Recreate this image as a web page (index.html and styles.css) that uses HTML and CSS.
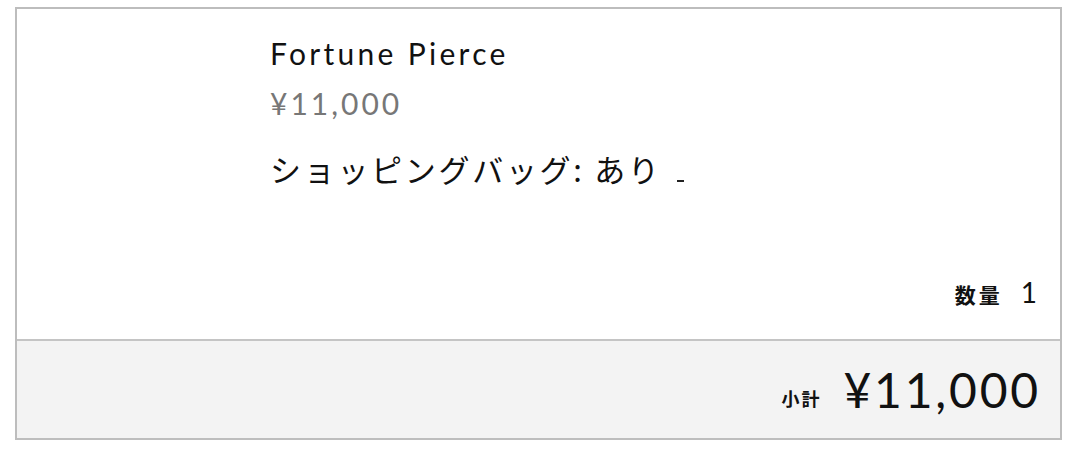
FILE: index.html
```html
<!DOCTYPE html>
<html lang="ja">
<head>
<meta charset="utf-8">
<link rel="stylesheet" href="styles.css">
</head>
<body>
<div class="card">
  <div class="item">
    <div class="thumb"></div>
    <div class="info">
      <div class="name">Fortune Pierce</div>
      <div class="price">¥11,000</div>
      <div class="option">ショッピングバッグ: あり<span class="dash"></span></div>
      <div class="qty"><span class="qty-label">数量</span><span class="qty-val">1</span></div>
    </div>
  </div>
  <div class="subtotal">
    <span class="sub-label">小計</span><span class="sub-val">¥11,000</span>
  </div>
</div>
</body>
</html>
```

FILE: styles.css
```css
html, body {
  margin: 0;
  padding: 0;
  background: #fff;
}
body {
  font-family: Lato, "Noto Sans CJK JP", sans-serif;
  color: #111;
}
.card {
  margin: 7px 18px 0 15px;
  border: 2px solid #bdbdbd;
}
.item {
  display: grid;
  grid-template-columns: 253px 1fr;
  height: 330px;
  border-bottom: 2px solid #c4c4c4;
}
.info {
  display: flex;
  flex-direction: column;
  padding-top: 24px;
  padding-right: 22px;
}
.name {
  font-size: 30px;
  letter-spacing: 3.3px;
  line-height: 40px;
}
.price {
  font-size: 30px;
  letter-spacing: 3px;
  line-height: 48px;
  margin-top: 6px;
  color: #777;
}
.option {
  font-family: "Noto Sans CJK JP", sans-serif;
  font-size: 31px;
  letter-spacing: 2.7px;
  line-height: 60px;
  margin-top: 12px;
  display: flex;
  align-items: baseline;
}
.dash {
  display: inline-block;
  width: 7px;
  height: 2px;
  background: #222;
  margin-left: 15px;
}
.qty {
  margin-top: auto;
  margin-bottom: 30px;
  display: flex;
  justify-content: flex-end;
  align-items: baseline;
}
.qty-label {
  font-family: "Noto Sans CJK JP", sans-serif;
  font-weight: 700;
  font-size: 21px;
  letter-spacing: 3px;
  margin-right: 18px;
}
.qty-val {
  font-size: 28px;
  margin-right: 1px;
}
.subtotal {
  background: #f3f3f3;
  height: 97px;
  display: flex;
  justify-content: flex-end;
  align-items: center;
  padding-right: 19px;
}
.sub-label {
  font-family: "Noto Sans CJK JP", sans-serif;
  font-weight: 700;
  font-size: 18px;
  letter-spacing: 2px;
  margin-right: 22px;
  margin-top: 16px;
}
.sub-val {
  font-size: 48px;
  letter-spacing: 2.8px;
}
```
